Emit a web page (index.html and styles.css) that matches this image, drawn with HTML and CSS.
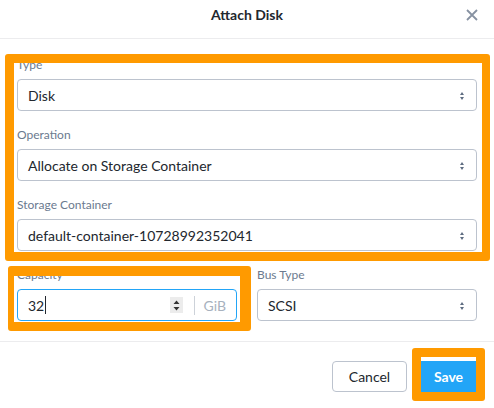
FILE: index.html
```html
<!DOCTYPE html>
<html lang="en">
<head>
    <meta charset="UTF-8" />
    <meta name="viewport" content="width=device-width, initial-scale=1" />
    <title>Attach Disk</title>
    <link rel="stylesheet" href="styles.css">
</head>
<body>
<div class="dialog">
    <header class="dlg-head">
        <h1>Attach Disk</h1>
        <span class="close">
            <svg width="12" height="12" viewBox="0 0 12 12"><path d="M1 1L11 11M11 1L1 11" stroke="#8792a2" stroke-width="1.8" fill="none"/></svg>
        </span>
    </header>

    <div class="dlg-body">
        <div class="group hl hl-main">
            <div class="field">
                <label>Type</label>
                <div class="select">Disk<span class="arrows"></span></div>
            </div>
            <div class="field">
                <label>Operation</label>
                <div class="select">Allocate on Storage Container<span class="arrows"></span></div>
            </div>
            <div class="field">
                <label>Storage Container</label>
                <div class="select">default-container-10728992352041<span class="arrows"></span></div>
            </div>
        </div>

        <div class="row">
            <div class="field hl hl-cap">
                <label>Capacity</label>
                <div class="input focus">
                    <span class="value">32</span><span class="caret"></span>
                    <span class="spin">
                        <svg width="7" height="11" viewBox="0 0 7 11"><path d="M3.5 0.5L6.5 4H0.5Z M3.5 10.5L6.5 7H0.5Z" fill="#333"/></svg>
                    </span>
                    <span class="sep"></span>
                    <span class="unit">GiB</span>
                </div>
            </div>
            <div class="field">
                <label>Bus Type</label>
                <div class="select">SCSI<span class="arrows"></span></div>
            </div>
        </div>
    </div>

    <footer class="dlg-foot">
        <button class="btn">Cancel</button>
        <span class="hl hl-save"><button class="btn primary">Save</button></span>
    </footer>
</div>
</body>
</html>
```

FILE: styles.css
```css
body {
    margin: 0;
    background: #fff;
    font-family: Lato, "Liberation Sans", sans-serif;
    color: #22272e;
}
.dialog {
    width: 494px;
    height: 408px;
}
.dlg-head {
    height: 39px;
    border-bottom: 1px solid #ececee;
    position: relative;
    box-sizing: border-box;
}
.dlg-head h1 {
    margin: 0;
    padding-top: 7px;
    text-align: center;
    font-size: 14px;
    line-height: 16px;
    font-weight: 700;
    color: #22272e;
}
.close {
    position: absolute;
    right: 16px;
    top: 9px;
    width: 12px;
    height: 12px;
    display: block;
}
.close svg {
    display: block;
}
.dlg-body {
    padding: 19px 17px 20px;
}
.field {
    margin-bottom: 17px;
}
.group .field:last-child {
    margin-bottom: 0;
}
.row {
    display: grid;
    grid-template-columns: 1fr 1fr;
    gap: 20px;
    margin-top: 17px;
}
.row .field {
    margin-bottom: 0;
}
label {
    display: block;
    font-size: 12px;
    line-height: 14px;
    margin-bottom: 7px;
    color: #6b7a8f;
}
.select, .input {
    height: 32px;
    box-sizing: border-box;
    border: 1px solid #bcc3ce;
    border-radius: 4px;
    padding: 0 10px;
    display: flex;
    align-items: center;
    font-size: 14px;
    position: relative;
}
.arrows {
    position: absolute;
    right: 11px;
    top: 12px;
    width: 5px;
    height: 8px;
}
.arrows::before, .arrows::after {
    content: "";
    position: absolute;
    left: 0;
    border-left: 2.5px solid transparent;
    border-right: 2.5px solid transparent;
}
.arrows::before {
    top: 0;
    border-bottom: 3px solid #5f6d82;
}
.arrows::after {
    bottom: 0;
    border-top: 3px solid #5f6d82;
}
.input.focus {
    border-color: #22a5f7;
}
.caret {
    width: 1px;
    height: 18px;
    background: #22272e;
    margin-left: 1px;
}
.spin {
    margin-left: auto;
    width: 13px;
    height: 16px;
    background: #ececec;
    display: flex;
    align-items: center;
    justify-content: center;
}
.spin svg {
    display: block;
}
.sep {
    width: 1px;
    height: 19px;
    background: #cdd2d9;
    margin: 0 9px 0 11px;
}
.unit {
    color: #a7b1be;
}
.dlg-foot {
    border-top: 1px solid #ececee;
    padding: 19px 18px 0;
    display: flex;
    justify-content: flex-end;
    align-items: flex-start;
    gap: 14px;
}
.btn {
    height: 31px;
    width: 75px;
    padding: 0;
    border: 1px solid #bcc3ce;
    border-radius: 4px;
    background: #fff;
    font-family: Lato, "Liberation Sans", sans-serif;
    font-size: 14px;
    color: #22272e;
}
.btn.primary {
    background: #22a5f7;
    border-color: #22a5f7;
    border-radius: 0;
    color: #fff;
    font-weight: 700;
    width: 55px;
    display: block;
}

/* orange highlight frames */
.hl {
    position: relative;
    display: block;
}
.hl::after {
    content: "";
    position: absolute;
    border: 9px solid #ff9a00;
    border-radius: 3px;
    pointer-events: none;
}
.hl-main::after {
    left: -12px;
    right: -13px;
    top: -4px;
    bottom: -10px;
    border-right-width: 8px;
}
.hl-cap::after {
    left: -9px;
    right: -14px;
    top: -2px;
    bottom: -10px;
    border-width: 10px 11px 9px 6px;
}
.hl-save::after {
    left: -9px;
    right: -9px;
    top: -13px;
    bottom: -9px;
}
```
